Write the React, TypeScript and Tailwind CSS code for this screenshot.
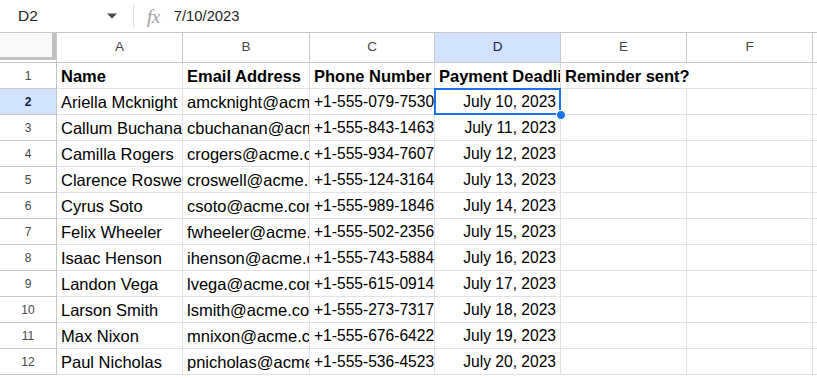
import React from "react";

const rows = [
  ["Ariella Mcknight", "amcknight@acme.com", "+1-555-079-7530", "July 10, 2023"],
  ["Callum Buchanan", "cbuchanan@acme.com", "+1-555-843-1463", "July 11, 2023"],
  ["Camilla Rogers", "crogers@acme.com", "+1-555-934-7607", "July 12, 2023"],
  ["Clarence Roswell", "croswell@acme.com", "+1-555-124-3164", "July 13, 2023"],
  ["Cyrus Soto", "csoto@acme.com", "+1-555-989-1846", "July 14, 2023"],
  ["Felix Wheeler", "fwheeler@acme.com", "+1-555-502-2356", "July 15, 2023"],
  ["Isaac Henson", "ihenson@acme.com", "+1-555-743-5884", "July 16, 2023"],
  ["Landon Vega", "lvega@acme.com", "+1-555-615-0914", "July 17, 2023"],
  ["Larson Smith", "lsmith@acme.com", "+1-555-273-7317", "July 18, 2023"],
  ["Max Nixon", "mnixon@acme.com", "+1-555-676-6422", "July 19, 2023"],
  ["Paul Nicholas", "pnicholas@acme.com", "+1-555-536-4523", "July 20, 2023"],
];

const cols = ["A", "B", "C", "D", "E", "F"];
const grid = "grid grid-cols-[57px_126px_127px_125px_126px_126px_126px_1fr]";

function Cell({
  children,
  right,
  bold,
  num,
  spill,
}: {
  children?: React.ReactNode;
  right?: boolean;
  bold?: boolean;
  num?: boolean;
  spill?: boolean;
}) {
  return (
    <div
      className={`h-[26px] border-b border-[#e1e1e1] px-[4px] flex items-end pb-[2px] whitespace-nowrap leading-[20px] text-black ${
        spill ? "overflow-visible relative z-10" : "overflow-hidden border-r"
      } ${num ? "text-[15.6px]" : "text-[16.5px]"} ${right ? "justify-end" : ""} ${bold ? "font-bold" : ""}`}
    >
      {children}
    </div>
  );
}

function RowHead({ n, active }: { n: number; active?: boolean }) {
  return (
    <div
      className={`h-[26px] border-r border-b border-[#c7c7c7] flex items-center justify-center text-[12px] ${
        active ? "bg-[#d3e3fd] font-bold text-[#0b1f4a]" : "text-[#444746]"
      }`}
    >
      {n}
    </div>
  );
}

export default function App() {
  return (
    <div className="w-[817px] h-[378px] overflow-hidden bg-white font-['Liberation_Sans',Arial,sans-serif]">
      {/* formula bar */}
      <div className="h-[33px] shrink-0 flex items-center border-b border-[#c7c7c7]">
        <div className="w-[99px] pl-[18px] text-[15.5px] text-[#1f1f1f]">D2</div>
        <svg width="10" height="6" viewBox="0 0 10 5" className="ml-[8px]">
          <path d="M0 0 L10 0 L5 5 Z" fill="#444746" />
        </svg>
        <div className="ml-[16px] w-px h-[22px] bg-[#dadce0]" />
        <span className="ml-[13px] text-[19px] leading-none italic text-[#a0a0a0] font-['Liberation_Serif',serif] tracking-[-0.5px]">
          fx
        </span>
        <span className="ml-[14px] text-[14.8px] text-[#1f1f1f]">7/10/2023</span>
      </div>

      {/* column headers */}
      <div className={`${grid} h-[30px]`}>
        <div className="h-[30px] border-b border-[#c7c7c7] border-r">
          <div className="h-[27px] bg-[#f8f9fa] border-r-[4px] border-b-[3px] border-[#c0c0c0]" />
        </div>
        {cols.map((c) => (
          <div
            key={c}
            className={`h-[30px] border-r border-b border-[#c7c7c7] flex items-center justify-center text-[13.5px] ${
              c === "D" ? "bg-[#d3e3fd] text-[#0b1f4a]" : "text-[#444746]"
            }`}
          >
            {c}
          </div>
        ))}
        <div className="h-[30px] border-b border-[#c7c7c7]" />
      </div>

      {/* body */}
      <div className={grid}>
        <RowHead n={1} />
        <Cell bold>Name</Cell>
        <Cell bold>Email Address</Cell>
        <Cell bold>Phone Number</Cell>
        <Cell bold>Payment Deadline</Cell>
        <Cell bold spill>Reminder sent?</Cell>
        <Cell />
        <Cell />
        {rows.map((r, i) => (
          <React.Fragment key={r[0]}>
            <RowHead n={i + 2} active={i === 0} />
            <Cell>{r[0]}</Cell>
            <Cell>{r[1]}</Cell>
            <Cell num>{r[2]}</Cell>
            <div className="relative">
              <Cell right num>
                {r[3]}
              </Cell>
              {i === 0 && (
                <>
                  <div className="absolute -left-[1px] -top-[1px] right-0 bottom-0 border-2 border-[#1a73e8] pointer-events-none" />
                  <div className="absolute -right-[5px] -bottom-[5px] w-[10px] h-[10px] rounded-full bg-[#1a73e8] border border-white z-10" />
                </>
              )}
            </div>
            <Cell />
            <Cell />
            <Cell />
          </React.Fragment>
        ))}
      </div>
    </div>
  );
}
